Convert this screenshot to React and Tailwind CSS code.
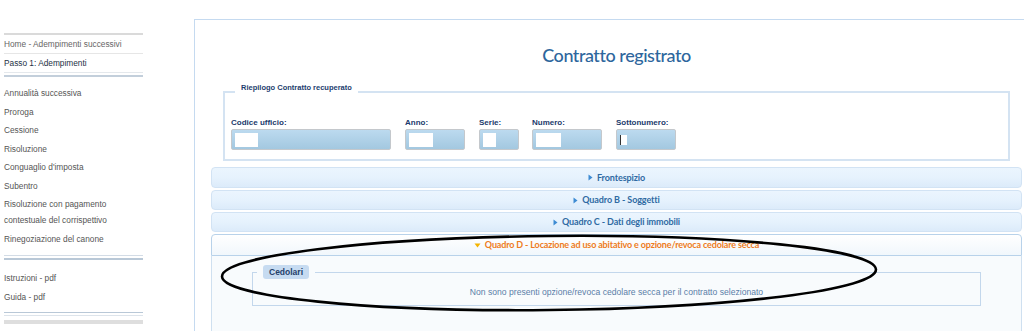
import React from 'react';

const SIDE_ITEMS = [
  'Annualità successiva',
  'Proroga',
  'Cessione',
  'Risoluzione',
  "Conguaglio d'imposta",
  'Subentro',
];

const FIELDS = [
  { label: 'Codice ufficio:', w: 'w-[160px]', box: 'w-[23px] h-[14px]', ml: '' },
  { label: 'Anno:', w: 'w-[60px]', box: 'w-[24px] h-[14px]', ml: 'ml-[14px]' },
  { label: 'Serie:', w: 'w-[40px]', box: 'w-[13px] h-[14px]', ml: 'ml-[14px]' },
  { label: 'Numero:', w: 'w-[70px]', box: 'w-[25px] h-[14px]', ml: 'ml-[13px]' },
  { label: 'Sottonumero:', w: 'w-[60px]', box: 'w-[7px] h-[10px] border-l border-[#333] mt-[2px]', ml: 'ml-[14px]' },
];

function Arrow({ open }) {
  if (open) {
    return (
      <svg width="7" height="5" viewBox="0 0 7 5" className="mr-[4px]">
        <path d="M0.5 0.5 L6.5 0.5 L3.5 4.5 Z" fill="#f4b400" />
      </svg>
    );
  }
  return (
    <svg width="5" height="7" viewBox="0 0 5 7" className="mr-[4px]">
      <path d="M0.5 0.5 L4.5 3.5 L0.5 6.5 Z" fill="#3d8bd3" />
    </svg>
  );
}

function AccHeader({ title, className }) {
  return (
    <div
      className={
        'flex items-center justify-center rounded-[4px] border border-[#d2e3f4] bg-gradient-to-b from-[#ebf5fe] via-[#e6f2fd] to-[#dcebfa] text-[9px] tracking-[-0.1px] font-bold text-[#2f6aa3] ' +
        className
      }
    >
      <Arrow />
      <span>{title}</span>
    </div>
  );
}

export default function App() {
  return (
    <div className="relative flex w-[1024px] h-[331px] overflow-hidden bg-white font-['Liberation_Sans',Arial,sans-serif]">
      {/* sidebar */}
      <div className="w-[194px] shrink-0 pl-[4px] pt-[33px]">
        <div className="w-[139px] text-[8.3px] text-[#555]">
          <div className="h-[2px] bg-[#dadada]" />
          <div className="h-[18px] leading-[19px] text-[#666]">Home - Adempimenti successivi</div>
          <div className="h-[1px] bg-[#e6e6e6]" />
          <div className="h-[18px] leading-[19px] text-[#1d3044]">Passo 1: Adempimenti</div>
          <div className="h-[1px] bg-[#e4e8ec]" />
          <div className="mt-[2px] h-[2px] bg-[#c3cfdb]" />
          <div className="mt-[8px]">
            {SIDE_ITEMS.map((t) => (
              <div key={t} className="leading-[16px] mb-[2.5px]">{t}</div>
            ))}
            <div className="leading-[16px] mb-[2.5px]">
              Risoluzione con pagamento
              <br />
              contestuale del corrispettivo
            </div>
            <div className="leading-[16px]">Rinegoziazione del canone</div>
          </div>
          <div className="mt-[8px] h-[1px] bg-[#d3dce6]" />
          <div className="mt-[2px] h-[2px] bg-[#b9c8d7]" />
          <div className="mt-[10px] leading-[16px]">Istruzioni - pdf</div>
          <div className="mt-[3px] leading-[16px]">Guida - pdf</div>
          <div className="mt-[7px] h-[1px] bg-[#b9c8d7]" />
          <div className="mt-[2px] h-[1px] bg-[#dde4eb]" />
          <div className="mt-[4px] h-[4px] bg-[#dedede]" />
        </div>
      </div>

      {/* main box */}
      <div className="mt-[19px] w-[844px] shrink-0 border-l border-t border-[#c5daf0] px-[16px]">
        <div className="mt-[22px] h-[26px] text-center text-[18px] font-medium leading-[26px] text-[#2d669d] font-['Lato',sans-serif] tracking-[-0.45px]">
          Contratto registrato
        </div>

        <fieldset className="mx-[12px] mt-[15px] border-2 border-[#d4e3f2] pl-[6px] pt-[17px] pb-[9px]">
          <legend className="ml-[4px] px-[6px] pb-[8px] text-[7.5px] font-bold leading-[10px] text-[#1d3d6e]">
            Riepilogo Contratto recuperato
          </legend>
          <div className="flex">
            {FIELDS.map((f) => (
              <div key={f.label} className={f.ml}>
                <div className="h-[11px] text-[8px] font-bold leading-[10px] text-[#1b3a6c]">{f.label}</div>
                <div className={'h-[21px] rounded-[2px] border border-[#c4c8cc] bg-gradient-to-b from-[#bcdaef] to-[#a3c8e0] pl-[3px] pt-[3px] ' + f.w}>
                  <div className={'bg-white ' + f.box} />
                </div>
              </div>
            ))}
          </div>
        </fieldset>

        {/* accordion */}
        <div className="mt-[6px] flex flex-col gap-[2px] font-['Lato',sans-serif]">
          <AccHeader title="Frontespizio" className="h-[21px]" />
          <AccHeader title="Quadro B - Soggetti" className="h-[20px]" />
          <AccHeader title="Quadro C - Dati degli immobili" className="h-[20px]" />
          <div>
            <div className="flex h-[22px] items-center justify-center rounded-t-[4px] border border-[#b8d2ea] bg-gradient-to-b from-[#ffffff] to-[#f1f7fc] text-[9px] tracking-[-0.15px] font-bold text-[#ee7b22]">
              <Arrow open />
              <span>Quadro D - Locazione ad uso abitativo e opzione/revoca cedolare secca</span>
            </div>
            <div className="h-[90px] border-x border-[#cfe0f0] bg-[#f8fbfd] px-[40px] pt-[9px] font-['Liberation_Sans',Arial,sans-serif]">
              <fieldset className="border border-[#c3d7ec] pb-[7px] pt-[7px]">
                <legend className="ml-[4px] px-[6px]">
                  <span className="block rounded-[3px] bg-[#c6dbf1] px-[6px] text-[8.5px] font-bold leading-[14px] text-[#24406b]">
                    Cedolari
                  </span>
                </legend>
                <div className="text-center text-[8.6px] leading-[12px] text-[#5a7ea8]">
                  Non sono presenti opzione/revoca cedolare secca per il contratto selezionato
                </div>
              </fieldset>
            </div>
          </div>
        </div>
      </div>

      {/* hand drawn annotation */}
      <svg className="pointer-events-none absolute left-0 top-0" width="1024" height="331" viewBox="0 0 1024 331">
        <ellipse
          cx="549"
          cy="273"
          rx="327"
          ry="37"
          transform="rotate(-0.6 549 273)"
          fill="none"
          stroke="#000"
          strokeWidth="2.6"
        />
      </svg>
    </div>
  );
}
